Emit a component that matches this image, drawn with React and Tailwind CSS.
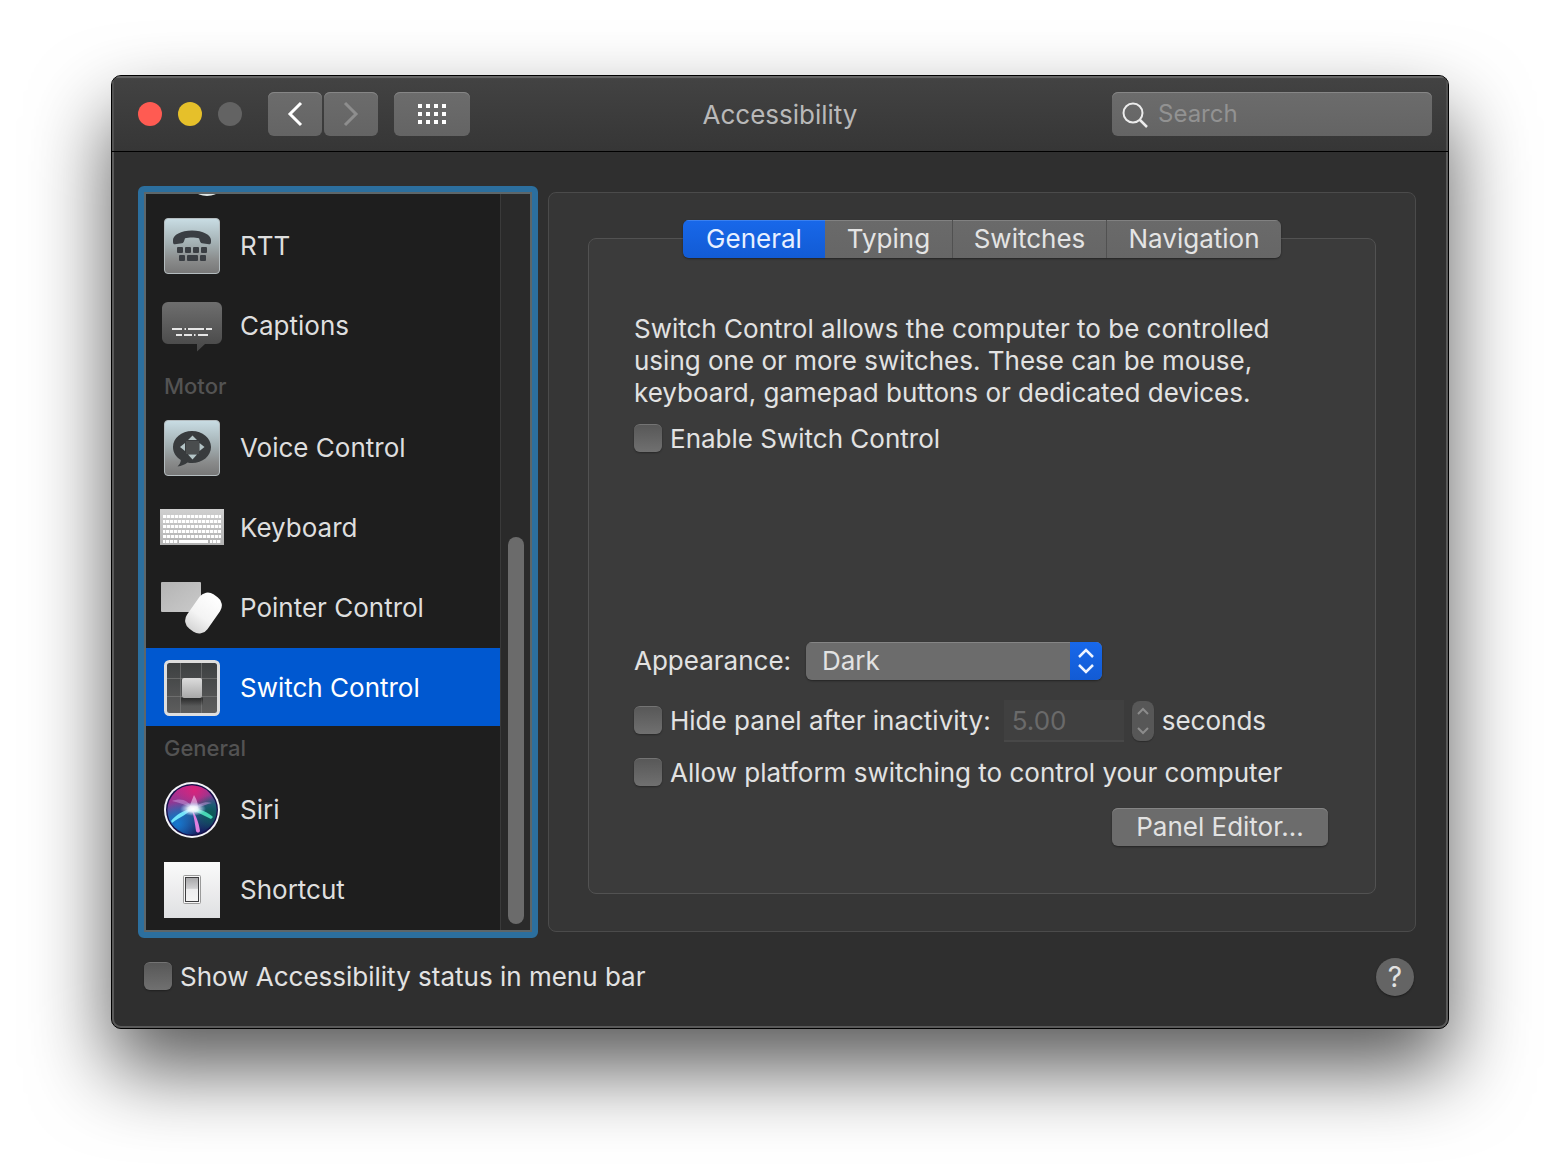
import { useState } from "react";
import { clsx } from "clsx";

const TABS = [
  { name: "General", width: "w-[142px]" },
  { name: "Typing", width: "w-[127px]" },
  { name: "Switches", width: "w-[154px]" },
  { name: "Navigation", width: "w-[175px]" },
];

const SECTIONS = [
  {
    items: [
      { name: "RTT", icon: RttIcon },
      { name: "Captions", icon: CaptionsIcon },
    ],
  },
  {
    title: "Motor",
    items: [
      { name: "Voice Control", icon: VoiceIcon },
      { name: "Keyboard", icon: KeyboardIcon },
      { name: "Pointer Control", icon: PointerIcon },
      { name: "Switch Control", icon: SwitchIcon },
    ],
  },
  {
    title: "General",
    items: [
      { name: "Siri", icon: SiriIcon },
      { name: "Shortcut", icon: ShortcutIcon },
    ],
  },
];

function Icon({ children }) {
  return (
    <svg viewBox="0 0 64 64" className="size-16 shrink-0" aria-hidden="true">
      {children}
    </svg>
  );
}

function SteelTile({ id }) {
  return (
    <>
      <defs>
        <linearGradient id={id} x1="0" y1="0" x2="0" y2="1">
          <stop offset="0" stopColor="#c9dde4" />
          <stop offset="0.45" stopColor="#a3b0b3" />
          <stop offset="0.75" stopColor="#8a8c8c" />
          <stop offset="1" stopColor="#777" />
        </linearGradient>
      </defs>
      <rect x="4.5" y="4.5" width="55" height="55" rx="3.5" fill={`url(#${id})`} stroke="#b4bcbf" />
    </>
  );
}

function RttIcon() {
  return (
    <Icon>
      <SteelTile id="rtt-tile" />
      <g fill="#3a3e43">
        <path d="M13 28v-2c0-5 8-9.500 19-9.500s19 4.500 19 9.500v2c0 2-1 2.500-2 2.300l-7-1c-1.200-.2-1.500-1-2-2l-1-3c-4-1-10-1-14 0l-1 3c-.5 1-.8 1.800-2 2l-7 1c-1 .2-2-.3-2-2.300z" />
        {[17, 25, 33, 41].map((x) => (
          <rect key={x} x={x} y="33" width="6" height="6" rx="1" />
        ))}
        <rect x="19" y="41" width="6" height="6" rx="1" />
        <rect x="27" y="41" width="11" height="6" rx="1" />
        <rect x="40" y="41" width="6" height="6" rx="1" />
      </g>
    </Icon>
  );
}

function CaptionsIcon() {
  return (
    <Icon>
      <defs>
        <linearGradient id="caption-fill" x1="0" y1="0" x2="0" y2="1">
          <stop offset="0" stopColor="#6e6e6e" />
          <stop offset="1" stopColor="#464646" />
        </linearGradient>
      </defs>
      <path
        d="M8 8h48a6 6 0 0 1 6 6v30a6 6 0 0 1-6 6H45l-8 7.5V50H8a6 6 0 0 1-6-6V14a6 6 0 0 1 6-6z"
        fill="url(#caption-fill)"
      />
      <path d="M12 35h10M24.5 35h1.500M28 35h16M46 35h6M16 41h6M24 41h8M34 41h1.500M38 41h10" stroke="#e6e6e6" strokeWidth="2" />
    </Icon>
  );
}

function VoiceIcon() {
  return (
    <Icon>
      <SteelTile id="voice-tile" />
      <path
        d="M32 15c10.500 0 19 7 19 16s-8.500 16-19 16c-1.500 0-3-.1-4.500-.5C25 48.500 21.500 50 17.500 50.500c2-2 3.300-4 3.300-6.500C16 41 13 36.500 13 31c0-9 8.500-16 19-16z"
        fill="#383b3d"
      />
      <path d="M32.500 19.500l4.500 4.500h-9zM32.500 43.500l4.500-5h-9zM20 31l5-4v8zM44.500 31l-5-4v8z" fill="#b4c4c6" />
      <rect x="26" y="25" width="13" height="13" fill="#4a4d4e" />
    </Icon>
  );
}

function KeyboardIcon() {
  return (
    <Icon>
      <defs>
        <linearGradient id="kb-fill" x1="0" y1="0" x2="0" y2="1">
          <stop offset="0" stopColor="#cfcfcf" />
          <stop offset="1" stopColor="#b2b2b2" />
        </linearGradient>
      </defs>
      <rect y="13" width="64" height="36" fill="url(#kb-fill)" />
      {[19, 24, 29, 34, 39, 44].map((y, i) => (
        <path
          key={y}
          d={i === 5 ? `M3 ${y + 1.5}h15M50 ${y + 1.5}h11` : `M3 ${y + 1.5}h58`}
          stroke="#fff"
          strokeWidth="3"
          strokeDasharray="3.3 0.7"
          strokeDashoffset={i % 2}
        />
      ))}
      <path d="M19 45.5h29" stroke="#fff" strokeWidth="3" />
    </Icon>
  );
}

function PointerIcon() {
  return (
    <Icon>
      <defs>
        <linearGradient id="pad-fill" x1="0" y1="0" x2="1" y2="1">
          <stop offset="0" stopColor="#b4b4b4" />
          <stop offset="1" stopColor="#cacaca" />
        </linearGradient>
        <linearGradient id="mouse-fill" x1="0" y1="0" x2="0" y2="1">
          <stop offset="0" stopColor="#fff" />
          <stop offset="0.6" stopColor="#f4f4f4" />
          <stop offset="1" stopColor="#d6d6d6" />
        </linearGradient>
      </defs>
      <rect x="1" y="6" width="40" height="30" rx="1" fill="url(#pad-fill)" />
      <rect x="31" y="16" width="25" height="42" rx="10" transform="rotate(35 43.5 37)" fill="url(#mouse-fill)" />
    </Icon>
  );
}

function SwitchIcon() {
  return (
    <Icon>
      <defs>
        <linearGradient id="sw-back" x1="0" y1="0" x2="0" y2="1">
          <stop offset="0" stopColor="#3c3f40" />
          <stop offset="1" stopColor="#5e5e5e" />
        </linearGradient>
        <linearGradient id="sw-key" x1="0" y1="0" x2="0" y2="1">
          <stop offset="0" stopColor="#dcdcdc" />
          <stop offset="1" stopColor="#a8a8a8" />
        </linearGradient>
        <linearGradient id="sw-drop" x1="0" y1="0" x2="0" y2="1">
          <stop offset="0" stopColor="#111" stopOpacity="0.7" />
          <stop offset="1" stopColor="#111" stopOpacity="0" />
        </linearGradient>
      </defs>
      <rect x="5.500" y="5.500" width="53" height="53" rx="4" fill="url(#sw-back)" stroke="#dedede" strokeWidth="3" />
      <path d="M20.500 7v50M41.500 7v50M7 22.500h50M7 40.500h50" stroke="#808080" strokeOpacity="0.6" />
      <rect x="21" y="41" width="22" height="9" rx="2" fill="url(#sw-drop)" />
      <rect x="22" y="22" width="20" height="20" rx="2" fill="url(#sw-key)" />
    </Icon>
  );
}

function SiriIcon() {
  return (
    <Icon>
      <defs>
        <linearGradient id="siri-base" x1="0.3" y1="0" x2="0.6" y2="1">
          <stop offset="0" stopColor="#c0288c" />
          <stop offset="0.3" stopColor="#8a3a94" />
          <stop offset="0.55" stopColor="#2c5b94" />
          <stop offset="1" stopColor="#141c5c" />
        </linearGradient>
        <radialGradient id="siri-pink" cx="0.55" cy="0.1" r="0.4">
          <stop offset="0" stopColor="#d8247c" />
          <stop offset="1" stopColor="#d8247c" stopOpacity="0" />
        </radialGradient>
        <radialGradient id="siri-blue" cx="0.2" cy="0.78" r="0.45">
          <stop offset="0" stopColor="#1678d0" />
          <stop offset="1" stopColor="#1678d0" stopOpacity="0" />
        </radialGradient>
        <radialGradient id="siri-green" cx="0.88" cy="0.58" r="0.38">
          <stop offset="0" stopColor="#0a5c54" />
          <stop offset="1" stopColor="#0a5c54" stopOpacity="0" />
        </radialGradient>
        <radialGradient id="siri-core">
          <stop offset="0" stopColor="#fff" />
          <stop offset="0.4" stopColor="#f0f8ff" stopOpacity="0.9" />
          <stop offset="1" stopColor="#b0d8ff" stopOpacity="0" />
        </radialGradient>
      </defs>
      <circle cx="32" cy="32" r="28" fill="#f4f4f8" />
      <circle cx="32" cy="32" r="26" fill="#15114a" />
      <circle cx="32" cy="32" r="24.5" fill="url(#siri-base)" />
      <circle cx="32" cy="32" r="24.5" fill="url(#siri-pink)" />
      <circle cx="32" cy="32" r="24.5" fill="url(#siri-blue)" />
      <circle cx="32" cy="32" r="24.5" fill="url(#siri-green)" />
      <path d="M12 23c8-3 16-2 21 8-6-4-13-6-21-8zM33 31c5-6 13-8 19-6-5 1-12 4-19 6z" fill="#c89be0" fillOpacity="0.5" />
      <path d="M34 17c3 5 5 10 3 15l-8 1c1-7 3-11 5-16z" fill="#eab4e4" fillOpacity="0.7" />
      <path d="M11 43c5-6 12-11 23-13-5 5-14 9-22 15z" fill="#70e4fa" />
      <path d="M32 30c8 1 16 4 21 9l-2 2c-6-3-12-6-19-9z" fill="#46d6b4" />
      <path d="M32 32c4 5 7 13 8 21-1 2-3 2-4 0-1-7-2-14-4-21z" fill="#e080e0" />
      <ellipse cx="33" cy="31" rx="13" ry="7" fill="url(#siri-core)" />
    </Icon>
  );
}

function ShortcutIcon() {
  return (
    <Icon>
      <defs>
        <linearGradient id="plate" x1="0" y1="0" x2="0" y2="1">
          <stop offset="0" stopColor="#fafafa" />
          <stop offset="1" stopColor="#dfe0e2" />
        </linearGradient>
        <linearGradient id="rocker" x1="0" y1="0" x2="0" y2="1">
          <stop offset="0" stopColor="#a6a6a8" />
          <stop offset="0.45" stopColor="#cfcfd1" />
          <stop offset="0.5" stopColor="#ededee" />
          <stop offset="1" stopColor="#f4f4f4" />
        </linearGradient>
      </defs>
      <rect x="4" y="4" width="56" height="56" fill="url(#plate)" />
      <rect x="23.5" y="17.5" width="17" height="28" rx="1" fill="#f6f6f6" stroke="#9a9a9a" />
      <rect x="25.5" y="19.5" width="13" height="24" fill="url(#rocker)" stroke="#3e3e40" />
    </Icon>
  );
}

function Check({ id, label }) {
  return (
    <div className="flex items-center gap-2">
      <input
        id={id}
        type="checkbox"
        className="mb-0.5 size-7 shrink-0 appearance-none rounded-md border-t border-[#747474] bg-linear-to-b from-[#585858] to-[#707070] shadow-[0_1px_2px_#0005] checked:from-[#1a6cf0] checked:to-[#1258d0]"
      />
      <label htmlFor={id} className="whitespace-nowrap">{label}</label>
    </div>
  );
}

function Toolbar() {
  const surface = "flex h-11 items-center rounded-md bg-linear-to-b from-[#6c6c6c] to-[#646464] shadow-[inset_0_1px_#868686]";
  return (
    <header className="grid grid-cols-[1fr_auto_1fr] items-center border-b border-black bg-linear-to-b from-[#434343] to-[#363636] px-4 pt-4 pb-[15px] shadow-[inset_0_2px_1px_#686868,inset_2px_0_#505050,inset_-2px_0_#505050]">
      <div className="flex items-center pl-2.5">
        <div className="mr-[26px] flex gap-4">
          <button aria-label="Close" className="size-6 rounded-full bg-[#ff5b52]" />
          <button aria-label="Minimize" className="size-6 rounded-full bg-[#e6c02a]" />
          <button aria-label="Zoom" disabled className="size-6 rounded-full bg-[#636363]" />
        </div>
        <button aria-label="Back" className={clsx(surface, "mr-0.5 w-[54px] justify-center")}>
          <svg viewBox="0 0 16 26" className="h-[26px] w-4" fill="none" stroke="#fff" strokeWidth="3">
            <path d="M14 2L3 13l11 11" />
          </svg>
        </button>
        <button aria-label="Forward" disabled className={clsx(surface, "mr-4 w-[54px] justify-center")}>
          <svg viewBox="0 0 16 26" className="h-[26px] w-4" fill="none" stroke="#8e8e8e" strokeWidth="3">
            <path d="M2 2l11 11L2 24" />
          </svg>
        </button>
        <button aria-label="Show All" className={clsx(surface, "w-[76px] justify-center")}>
          <svg viewBox="0 0 28 20" className="h-5 w-7" fill="#fff">
            {[0, 8, 16].map((y) => [0, 8, 16, 24].map((x) => <rect key={`${x}-${y}`} x={x} y={y} width="4" height="4" />))}
          </svg>
        </button>
      </div>

      <h1 className="pt-0.5 text-[#b9b9b9]">Accessibility</h1>

      <label className={clsx(surface, "w-80 gap-2 justify-self-end pl-2.5")}>
        <svg viewBox="0 0 28 28" className="size-7 shrink-0" fill="none" stroke="#ececec" strokeWidth="2">
          <circle cx="11" cy="13" r="9.5" />
          <path d="M17.5 19.500l7.500 7.500" strokeWidth="2.5" />
        </svg>
        <input type="search" aria-label="Search" placeholder="Search" className="w-full min-w-0 bg-transparent text-2xl outline-none placeholder:text-[#929292]" />
      </label>
    </header>
  );
}

function Sidebar({ selected, onSelect }) {
  return (
    <nav className="flex w-[400px] shrink-0 rounded-md border-6 border-[#2c6f9e]">
      <div className="flex flex-1 border-2 border-[#5d6669] bg-[#1e1e1e]">
        <div className="flex-1">
          <svg viewBox="0 0 64 12" className="ml-3.5 h-3 w-16" aria-hidden="true">
            <ellipse cx="47" cy="-3" rx="11" ry="5" fill="#dfe6e6" />
          </svg>
          {SECTIONS.map((section, i) => (
            <section key={i}>
              {section.title && (
                <h2 className="mb-0.5 flex h-10 items-center pl-[18px] text-[22px] font-medium text-[#535353]">{section.title}</h2>
              )}
              <ul>
                {section.items.map(({ name, icon: ItemIcon }) => (
                  <li key={name} className="h-20 pb-0.5">
                    <button
                      onClick={() => onSelect(name)}
                      className={clsx(
                        "flex h-full w-full items-center gap-4 pt-0.5 pl-3.5 text-left whitespace-nowrap",
                        name === selected ? "bg-[#0058d0] text-white" : "text-[#dedede]"
                      )}
                    >
                      <ItemIcon />
                      {name}
                    </button>
                  </li>
                ))}
              </ul>
            </section>
          ))}
        </div>
        <div className="flex w-[30px] flex-col justify-end border-l border-[#3a3a3a] bg-[#2a2a2a] pb-1.5 pl-[7px]">
          <div className="h-[387px] w-4 rounded-full bg-[#6b6b6b]" />
        </div>
      </div>
    </nav>
  );
}

function SwitchControlPanel() {
  const [tab, setTab] = useState("General");

  return (
    <main className="my-1.5 flex flex-1 flex-col rounded-lg border border-[#4b4b4b] bg-[#363636] px-[39px] pt-[27px] pb-[37px]">
      <div role="tablist" className="z-10 mb-[-20px] flex self-center overflow-hidden rounded-md shadow-[0_1px_2px_#0006]">
        {TABS.map(({ name, width }, i) => (
          <button
            key={name}
            role="tab"
            aria-selected={tab === name}
            onClick={() => setTab(name)}
            className={clsx(
              "flex h-[38px] items-center justify-center bg-linear-to-b",
              width,
              i > 1 && "border-l border-[#515151]",
              tab === name
                ? "from-[#1868ea] to-[#125bd4] text-[#e8f0ff] shadow-[inset_0_1px_#3a80f0]"
                : "from-[#6a6a6a] to-[#666] text-[#e4e4e4] shadow-[inset_0_1px_#818181]"
            )}
          >
            {name}
          </button>
        ))}
      </div>

      <div role="tabpanel" className="flex flex-1 flex-col rounded-lg border border-[#525252] bg-[#3b3b3b] pt-[74px] pr-[47px] pb-[47px] pl-[45px]">
        <p>
          Switch Control allows the computer to be controlled
          <br />
          using one or more switches. These can be mouse,
          <br />
          keyboard, gamepad buttons or dedicated devices.
        </p>
        <div className="mt-3.5">
          <Check id="enable" label="Enable Switch Control" />
        </div>

        <div className="mt-auto flex items-center">
          <label htmlFor="appearance" className="w-[172px]">Appearance:</label>
          <div className="grid w-[296px] grid-cols-[1fr_32px] overflow-hidden rounded-md shadow-[0_1px_2px_#0006]">
            <select
              id="appearance"
              className="col-span-2 col-start-1 row-start-1 h-[38px] appearance-none bg-[#6c6c6c] pl-4 shadow-[inset_0_1px_#858585] outline-none"
            >
              <option>Dark</option>
              <option>Light</option>
            </select>
            <span className="pointer-events-none col-start-2 row-start-1 flex items-center justify-center bg-linear-to-b from-[#1868ea] to-[#125bd4]">
              <svg viewBox="0 0 16 26" className="h-[26px] w-4" fill="none" stroke="#eef4ff" strokeWidth="2.5">
                <path d="M1 9l7-7 7 7M1 17l7 7 7-7" />
              </svg>
            </span>
          </div>
        </div>

        <div className="mt-5 flex h-[42px] items-center">
          <Check id="hide" label="Hide panel after inactivity:" />
          <input
            type="text"
            aria-label="Seconds of inactivity"
            disabled
            defaultValue="5.00"
            className="ml-[13px] h-[42px] w-[120px] border-b-2 border-[#484848] bg-[#404040] pl-2 text-[#6a6a6a]"
          />
          <div className="ml-2 flex h-10 w-[22px] flex-col overflow-hidden rounded-lg bg-[#575757] shadow-[0_1px_1px_#0004]">
            <button aria-label="Increase" disabled className="flex flex-1 items-center justify-center">
              <svg viewBox="0 0 12 8" className="h-2 w-3" fill="none" stroke="#8c8c8c" strokeWidth="2">
                <path d="M1 7l5-5 5 5" />
              </svg>
            </button>
            <button aria-label="Decrease" disabled className="flex flex-1 items-center justify-center">
              <svg viewBox="0 0 12 8" className="h-2 w-3" fill="none" stroke="#8c8c8c" strokeWidth="2">
                <path d="M1 1l5 5 5-5" />
              </svg>
            </button>
          </div>
          <span className="ml-2">seconds</span>
        </div>

        <div className="mt-[15px]">
          <Check id="platform" label="Allow platform switching to control your computer" />
        </div>
        <button className="mt-[19px] flex h-[38px] w-[216px] items-center justify-center self-end rounded-md bg-[#6c6c6c] shadow-[inset_0_1px_#858585,0_1px_2px_#0006]">
          Panel Editor...
        </button>
      </div>
    </main>
  );
}

export default function App() {
  const [selected, setSelected] = useState("Switch Control");

  return (
    <div className="min-h-screen bg-white px-[111px] pt-[75px] pb-[147px] font-[Inter,sans-serif] text-[26px] leading-8 text-[#e2e2e2]">
      <div className="rounded-[10px] border border-black bg-[#2f2f2f] shadow-[0_40px_80px_#000000a6]">
        <div className="overflow-hidden rounded-[9px] shadow-[inset_0_0_0_2px_#5a5a5a]">
          <Toolbar />
          <div className="flex gap-2.5 pt-[34px] pr-8 pl-[26px]">
            <Sidebar selected={selected} onSelect={setSelected} />
            <SwitchControlPanel />
          </div>
          <footer className="flex items-center justify-between pt-5 pr-[34px] pb-8 pl-8">
            <Check id="menubar" label="Show Accessibility status in menu bar" />
            <button aria-label="Help" className="flex size-[38px] items-center justify-center rounded-full bg-[#646464] text-[28px] shadow-[0_1px_2px_#0006]">
              ?
            </button>
          </footer>
        </div>
      </div>
    </div>
  );
}
